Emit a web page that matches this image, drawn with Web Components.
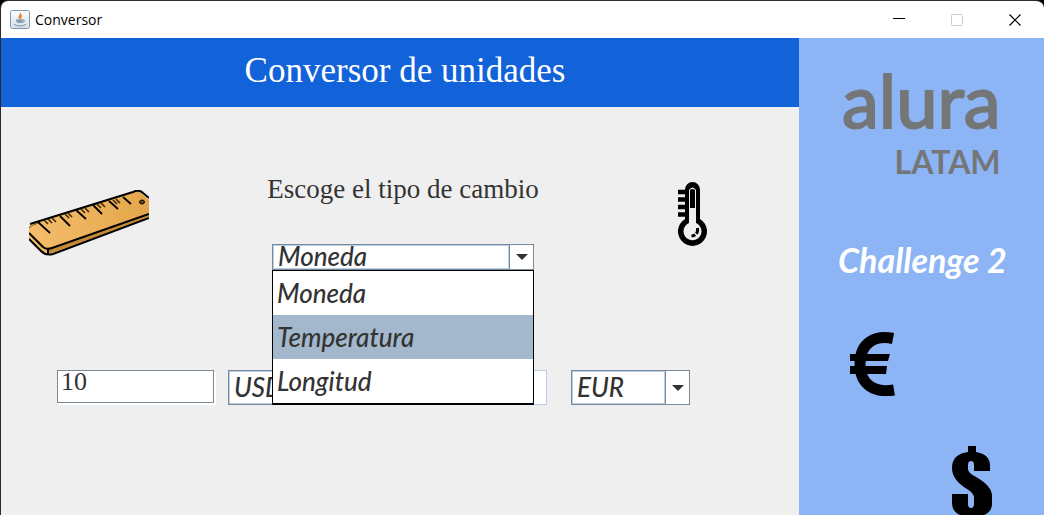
<!DOCTYPE html>
<html lang="es">
<head>
<meta charset="utf-8">
<meta name="viewport" content="width=device-width, initial-scale=1">
<title>Conversor</title>
<style>
  html, body { margin: 0; background: #000; }
  body {
    --serif: "Liberation Serif", serif;
    --casual: Lato, sans-serif;
    --ink: #333;
    --edge: #7a8a99;
    --soft-edge: #b8cfe5;
  }
</style>
</head>
<body>
<app-window></app-window>

<script>
const define = (name, html, setup) => {
  const template = document.createElement('template');
  template.innerHTML = html;
  customElements.define(name, class extends HTMLElement {
    constructor() {
      super();
      this.attachShadow({ mode: 'open' }).append(template.content.cloneNode(true));
    }
    connectedCallback() { if (setup) setup(this, this.shadowRoot); }
  });
};

define('title-bar', `
<style>
  :host { display: flex; align-items: center; justify-content: space-between; height: 37px; background: #fff; }
  .name { display: flex; align-items: center; gap: 5px; padding-left: 9px; font: 14px/20px "Open Sans", sans-serif; color: #000; }
  .buttons { display: flex; }
  svg { display: block; }
  button { display: grid; place-items: center; width: 58px; height: 37px; padding: 0; border: 0; background: none; }
</style>
<div class="name">
  <svg width="20" height="20" viewBox="0 0 20 20" aria-hidden="true">
    <defs><linearGradient id="g" x2="0" y2="1"><stop stop-color="#fff"/><stop offset="1" stop-color="#d3dce5"/></linearGradient></defs>
    <rect x=".5" y=".5" width="19" height="18" rx="2" fill="url(#g)" stroke="#8297ab"/>
    <path d="M10.500 3c1 2-3 3.500-1 6M12 5.500c-2 1-2 2-.8 3.500" fill="none" stroke="#e8822e" stroke-width="1.400"/>
    <path d="M6 10h7c0 2-1 3-2.500 3H8.500C7 13 6 12 6 10z" fill="#7f9db8"/>
    <path d="M13 10c2.500-.5 2 2-1 2.500M4 14c2 2.500 10 2.500 12 0M6 10h7" fill="none" stroke="#7796b1"/>
  </svg>
  <span>Conversor</span>
</div>
<div class="buttons">
  <button aria-label="Minimizar"><svg width="12" height="12"><path d="M0 4.500h12" stroke="#000"/></svg></button>
  <button aria-label="Maximizar" disabled><svg width="12" height="12"><rect x=".5" y=".5" width="11" height="11" rx="1" fill="none" stroke="#ccc"/></svg></button>
  <button aria-label="Cerrar"><svg width="12" height="12"><path d="M.5 .5l11 11M11.500 .5l-11 11" stroke="#000" stroke-width="1.200"/></svg></button>
</div>`);

define('ruler-icon', `
<style>:host { display: block; } svg { display: block; }</style>
<svg width="120" height="66" viewBox="0 0 120 66" role="img" aria-label="Regla">
  <defs><linearGradient id="w"><stop stop-color="#f5bd6c"/><stop offset="1" stop-color="#e3a64a"/></linearGradient></defs>
  <path d="M0 35L105 2q5-2 8 2l7 6v17L24 63q-5 3-9 0L0 50z" fill="url(#w)"/>
  <path d="M20 59L120 23v4L20 64z" fill="#c68a35"/>
  <path d="M0 43l14 14q3 3 9 1L120 24M0 49l12 12q5 5 12 3L120 28M19 59v5M1 34L104 2q6-3 10 1l6 5" fill="none" stroke="#000" stroke-width="2"/>
  <path d="M0 38q3-3 9-5" fill="none" stroke="#7a5522"/>
  <path d="M9 32l12 11M31 26l10 10M47 20l10 9M64 15l9 9M80 11l9 8M94 7l8 7" fill="none" stroke="#000" stroke-width="1.800"/>
  <path d="M15 30l4 4m0-5l4 4m0-5l4 4m9-8l4 4m-1-5l4 4m9-8l4 4m0-5l4 4m8-8l4 4m0-5l4 4m8-7l4 4m-1-5l4 4" fill="none" stroke="#3a2708" stroke-width="1.600"/>
  <ellipse cx="113" cy="12" rx="2.500" ry="2" fill="#6d4713" stroke="#000"/>
</svg>`);

define('thermo-icon', `
<style>:host { display: block; } svg { display: block; }</style>
<svg width="30" height="66" viewBox="0 0 30 66" role="img" aria-label="Termómetro">
  <path d="M1 11h10M1 18.500h10M1 26h10M1 33.500h10" stroke="#000" stroke-width="4.500"/>
  <path d="M8 9a7.500 8 0 0 1 15 0v29a14.500 14.500 0 1 1-15 0z" fill="#000"/>
  <path d="M12 9q3.500-5 7 0v33a9 9 0 1 1-7 0z" fill="#efefef"/>
  <path d="M13 9q2.500-2 5 0v18h-5z" fill="#000"/>
  <path d="M20.500 47q1 7-6 8" fill="none" stroke="#000" stroke-width="3" stroke-dasharray="6 1.500"/>
</svg>`);

define('combo-box', `
<style>
  :host { display: grid; grid-template-columns: 1fr 24px; position: relative; box-sizing: border-box; height: var(--combo-height, 35px); border: 1px solid var(--edge); background: #fff; }
  select { grid-area: 1 / 1 / 2 / 3; min-width: 0; width: 100%; height: 100%; appearance: none; border: 0; border-radius: 0; outline: 0; margin: 0; padding: 0 24px 2px 5px; background: none; color: var(--ink); font: italic 500 26px/22px var(--casual); }
  .frame { grid-area: 1 / 1; border: 1px solid var(--soft-edge); pointer-events: none; }
  .arrow { grid-area: 1 / 2; display: grid; place-items: center; border-left: 1px solid var(--edge); pointer-events: none; }
  svg { display: block; }
</style>
<select></select>
<span class="frame"></span>
<span class="arrow"><svg width="12" height="6"><path d="M0 0h12L6 6z" fill="#333"/></svg></span>
<slot></slot>`, (host, root) => {
  const select = root.querySelector('select');
  select.setAttribute('aria-label', host.getAttribute('label'));
  select.replaceChildren(...host.getAttribute('options').split(',').map(name => new Option(name)));
});

define('combo-popup', `
<style>
  :host { display: block; position: absolute; z-index: 2; left: -1px; right: -1px; top: calc(100% + 1px); border: 1px solid #000; border-bottom-width: 2px; background: #fff; }
  ul { margin: 0; padding: 0; list-style: none; }
  li { padding: 0 4px; color: var(--ink); font: italic 500 26px/44px var(--casual); }
  li[aria-selected="true"] { background: #a3b8cc; }
</style>
<ul role="listbox" aria-label="Tipo de cambio">
  <li role="option">Moneda</li>
  <li role="option" aria-selected="true">Temperatura</li>
  <li role="option">Longitud</li>
</ul>`);

define('amount-field', `
<style>
  :host { display: block; }
  input { display: block; box-sizing: border-box; width: 100%; height: 33px; margin: 0; padding: 0 3px 10px; border: 1px solid var(--edge); border-radius: 0; background: #fff; box-shadow: 2px 2px #fff; outline: 0; color: var(--ink); font: 26px/22px var(--serif); }
  :host([readonly]) input { height: 35px; border-color: var(--soft-edge); box-shadow: none; }
</style>
<input type="text">`, (host, root) => {
  const input = root.querySelector('input');
  input.value = host.getAttribute('value') || '';
  input.readOnly = host.hasAttribute('readonly');
  input.setAttribute('aria-label', host.getAttribute('label'));
});

define('converter-panel', `
<style>
  :host { display: block; background: #efefef; }
  h1 { margin: 0; padding: 0 0 3px 10px; background: #1262da; color: #fff; text-align: center; font: 35px/66px var(--serif); }
  .kind { display: grid; grid-template-columns: 126px 1fr 120px; align-items: start; padding: 64px 28px 0; }
  .choice { display: grid; justify-items: center; gap: 37px; }
  .choice p { margin: 0; color: var(--ink); font: 27px/36px var(--serif); }
  .choice combo-box { --combo-height: 26px; width: 262px; }
  ruler-icon { margin-top: 19px; }
  thermo-icon { margin-top: 10px; padding-left: 26px; }
  .amounts { display: grid; grid-template-columns: 171fr 120fr 40fr 183fr 119fr; padding: 100px 109px 0 56px; align-items: start; }
  .from { margin-right: 14px; }
  .to { grid-column: 4; margin-right: 24px; }
</style>
<h1>Conversor de unidades</h1>
<div class="kind">
  <ruler-icon></ruler-icon>
  <div class="choice">
    <p>Escoge el tipo de cambio</p>
    <combo-box label="Tipo de cambio" options="Moneda,Temperatura,Longitud"><combo-popup></combo-popup></combo-box>
  </div>
  <thermo-icon></thermo-icon>
</div>
<div class="amounts">
  <amount-field class="from" label="Cantidad" value="10"></amount-field>
  <combo-box label="Unidad de origen" options="USD"></combo-box>
  <amount-field class="to" label="Resultado" readonly></amount-field>
  <combo-box label="Unidad de destino" options="EUR"></combo-box>
</div>`);

define('brand-panel', `
<style>
  :host { display: flex; flex-direction: column; background: #8db4f4; overflow: hidden; }
  .logo { display: grid; width: 157px; margin: 16px 0 0 43px; color: #747678; }
  .alura { font: 74px/92px Lato, sans-serif; -webkit-text-stroke: 2px #747678; }
  .latam { justify-self: end; font: bold 32px/32px Lato, sans-serif; }
  h2 { margin: 62px 0 0; padding-left: 39px; color: #fff; font: italic bold 34px/40px var(--casual); white-space: nowrap; }
  svg { display: block; flex: none; }
  .euro { margin: 52px 0 0 50px; }
  .dollar { margin: 50px 0 0 152px; }
</style>
<div class="logo"><span class="alura">alura</span><span class="latam">LATAM</span></div>
<h2>Challenge 2</h2>
<svg class="euro" width="47" height="64" viewBox="0 0 47 64" role="img" aria-label="Euro">
  <path d="M44 6.500C27 3 11 10 11 32S27 61 45 58" fill="none" stroke="#000" stroke-width="11"/>
  <path d="M1 22h40l-2 7H1zM1 34h37l-1 8H1z" fill="#000"/>
</svg>
<svg class="dollar" width="42" height="78" viewBox="0 0 42 78" role="img" aria-label="Dólar">
  <path d="M17 0h8v6q14 2 14 14v5H23v-6q0-4-3-4t-3 4v4q0 4 8 8 16 9 16 19v8q0 11-16 13v7h-8v-7Q1 69 1 57v-9h16v10q0 4 3 4t3-4v-6q0-5-7-9Q1 34 1 22 1 8 17 6z" fill="#000"/>
</svg>`);

define('app-window', `
<style>
  :host { display: grid; grid-template: auto 1fr / 1fr 245px; box-sizing: border-box; height: 100vh; border: solid #2b2b2b; border-width: 1px 0 0 1px; border-radius: 8px 8px 0 0; overflow: hidden; }
  title-bar { grid-column: 1 / 3; }
</style>
<title-bar></title-bar>
<converter-panel></converter-panel>
<brand-panel></brand-panel>`);
</script>
</body>
</html>
